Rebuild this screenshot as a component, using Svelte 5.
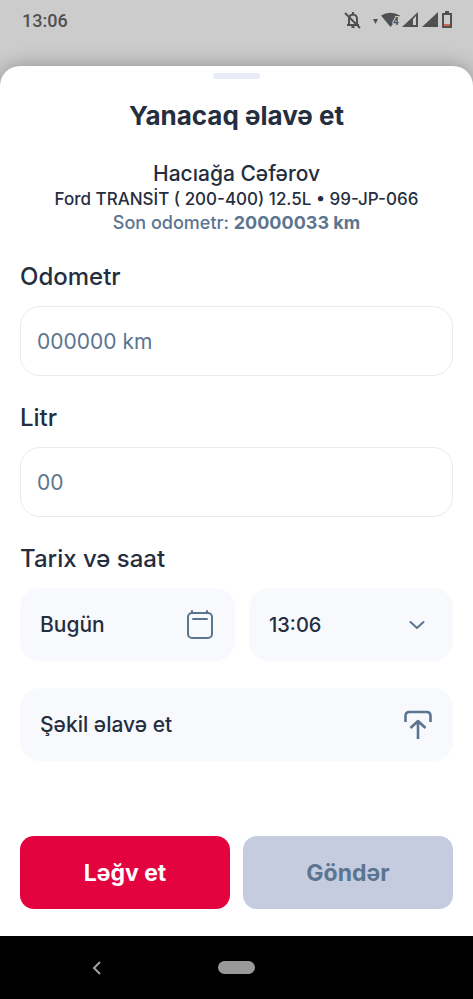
<script lang="ts">
  let odometer = $state("");
  let litres = $state("");
  let time = $state("13:06");

  const times = ["13:06", "13:30", "14:00"];
  const ready = $derived(odometer !== "" && litres !== "");

  function cancel() {
    odometer = "";
    litres = "";
  }

  function submit(event: SubmitEvent) {
    event.preventDefault();
  }
</script>

<div class="screen">
  <header class="status">
    <span>13:06</span>
    <div class="status-icons">
      <svg width="18" height="18" viewBox="0 0 18 18" fill="none" stroke="#505050" stroke-width="2">
        <path d="M3 14h12M5 13V8q0-4 4-4.500q4 .5 4 4.500v5M9 1v3" />
        <path d="M1 2l15 15" />
        <path d="M7.500 16h3" />
      </svg>
      <svg width="84" height="18" viewBox="0 0 84 18" fill="#505050">
        <path d="M1 8h5l-2.500 5z" />
        <path d="M9 4.500Q18 -1 28 4.500L18.500 16z" />
        <text class="wifi" x="21" y="14">4</text>
        <path d="M30 16L46 1v15zM41 8v6h3V5z" fill-rule="evenodd" />
        <path d="M50 16L66 1v15z" />
        <path d="M70 2h3V0h4v2h3v15H70zM72 4v9.500h6V4z" fill-rule="evenodd" />
        <path d="M72 13h6v2h-6z" fill="#d4634f" />
      </svg>
    </div>
  </header>

  <main class="sheet">
    <div class="handle"></div>
    <h1>Yanacaq əlavə et</h1>

    <div class="vehicle">
      <p class="driver">Hacıağa Cəfərov</p>
      <p>Ford TRANSİT ( 200-400) 12.5L • 99-JP-066</p>
      <p class="last">Son odometr: <b>20000033 km</b></p>
    </div>

    <form onsubmit={submit}>
      <label class="title" for="odometer">Odometr</label>
      <input id="odometer" inputmode="numeric" placeholder="000000 km" bind:value={odometer} />

      <label class="title" for="litres">Litr</label>
      <input id="litres" inputmode="decimal" placeholder="00" bind:value={litres} />

      <label class="title" for="time">Tarix və saat</label>
      <div class="when">
        <button type="button" class="tile">
          Bugün
          <svg width="28" height="30" viewBox="0 0 28 30" fill="none" stroke="#5b7590" stroke-width="2" stroke-linecap="round">
            <rect x="2" y="3" width="24" height="25" rx="4" />
            <path d="M6 1v2M21 1v2M7 9h14" />
          </svg>
        </button>
        <div class="time">
          <select id="time" class="tile" bind:value={time}>
            {#each times as t}
              <option>{t}</option>
            {/each}
          </select>
          <svg class="chevron" width="18" height="12" viewBox="0 0 18 12" fill="none" stroke="#5b7590" stroke-width="2" stroke-linecap="round" stroke-linejoin="round">
            <path d="M2.500 3L9 9l6.500-6" />
          </svg>
        </div>
      </div>

      <button type="button" class="tile photo">
        Şəkil əlavə et
        <svg width="28" height="30" viewBox="0 0 28 30" fill="none" stroke="#5b7590" stroke-width="2.600" stroke-linejoin="round">
          <path d="M2 12V6q0-4 4-4h17q4 0 4 4v6" transform="translate(-.5)" />
          <path d="M14 29V11M6.500 18L14 11l7.500 7" />
        </svg>
      </button>

      <div class="actions">
        <button type="button" class="cancel" onclick={cancel}>Ləğv et</button>
        <button type="submit" class="send" disabled={!ready}>Göndər</button>
      </div>
    </form>
  </main>

  <nav>
    <button type="button" class="back" aria-label="Back">
      <svg width="10" height="14" viewBox="0 0 10 14" fill="none" stroke="#a0a0a0" stroke-width="2">
        <path d="M8 1L2 7l6 6" />
      </svg>
    </button>
    <button type="button" class="home" aria-label="Home"></button>
  </nav>
</div>

<style>
  :global(body) {
    margin: 0;
    background: #ccc;
  }

  .screen {
    display: flex;
    flex-direction: column;
    min-height: 100vh;
    font-family: Inter, "Noto Sans", sans-serif;
    color: #252e3e;
  }

  .status {
    display: flex;
    align-items: center;
    justify-content: space-between;
    box-sizing: border-box;
    height: 66px;
    padding: 0 17px 26px 22px;
    color: #505050;
    font: 500 18px Roboto, sans-serif;
  }

  .status-icons {
    display: flex;
    gap: 10px;
  }

  .wifi {
    font-size: 10px;
    font-weight: 700;
    paint-order: stroke;
    stroke: #ccc;
    stroke-width: 2px;
  }

  .sheet {
    display: flex;
    flex: 1;
    flex-direction: column;
    padding: 7px 20px 27px;
    border-radius: 20px 20px 0 0;
    background: #fff;
    box-shadow: 0 0 20px rgba(0, 0, 0, 0.3);
  }

  .handle {
    width: 47px;
    height: 6px;
    margin: 0 auto;
    border-radius: 3px;
    background: #e8eaf6;
  }

  h1 {
    margin: 20px 0 28px;
    font-size: 26px;
    line-height: 34px;
    font-weight: 700;
    text-align: center;
  }

  .vehicle {
    text-align: center;
    font-size: 17px;
    font-weight: 500;
    line-height: 24px;
  }

  p {
    margin: 0;
  }

  .driver {
    font-size: 21px;
    line-height: 26px;
  }

  .last {
    color: #5b7590;
    font-size: 18px;
  }

  form {
    display: flex;
    flex: 1;
    flex-direction: column;
  }

  .title {
    margin: 25px 0 12px;
    font-size: 24px;
    font-weight: 500;
    line-height: 34px;
  }

  input {
    box-sizing: border-box;
    width: 100%;
    height: 70px;
    padding: 0 16px;
    border: 1px solid #e9ebee;
    border-radius: 20px;
    background: #fff;
    color: #252e3e;
    font: 400 21px Inter, "Noto Sans", sans-serif;
  }

  input::placeholder {
    color: #5b7590;
    opacity: 1;
  }

  .when {
    display: grid;
    grid-template-columns: 215fr 204fr;
    gap: 14px;
  }

  .tile {
    display: flex;
    align-items: center;
    justify-content: space-between;
    box-sizing: border-box;
    width: 100%;
    height: 73px;
    padding: 0 21px 0 20px;
    border: 0;
    border-radius: 20px;
    background: #f8f9fd;
    color: #252e3e;
    font: 500 21px Inter, "Noto Sans", sans-serif;
    appearance: none;
  }

  select.tile {
    font-size: 20px;
  }

  .time {
    position: relative;
  }

  .chevron {
    position: absolute;
    top: 31px;
    right: 27px;
    pointer-events: none;
  }

  .photo {
    margin: 27px 0;
  }

  .actions {
    display: grid;
    grid-template-columns: 1fr 1fr;
    gap: 13px;
    margin-top: auto;
  }

  .actions button {
    height: 73px;
    border: 0;
    border-radius: 14px;
    font: 700 23px Inter, "Noto Sans", sans-serif;
  }

  .cancel {
    background: #e2033f;
    color: #fff;
  }

  .send {
    background: #c5cce0;
    color: #5b7590;
  }

  nav {
    display: grid;
    grid-template-columns: 1fr 37px 1fr;
    align-items: center;
    height: 63px;
    background: #000;
  }

  nav button {
    display: flex;
    justify-content: center;
    padding: 0;
    border: 0;
    background: none;
  }

  nav .back {
    padding-right: 24px;
  }

  nav .home {
    height: 13px;
    border-radius: 7px;
    background: #999;
  }
</style>
